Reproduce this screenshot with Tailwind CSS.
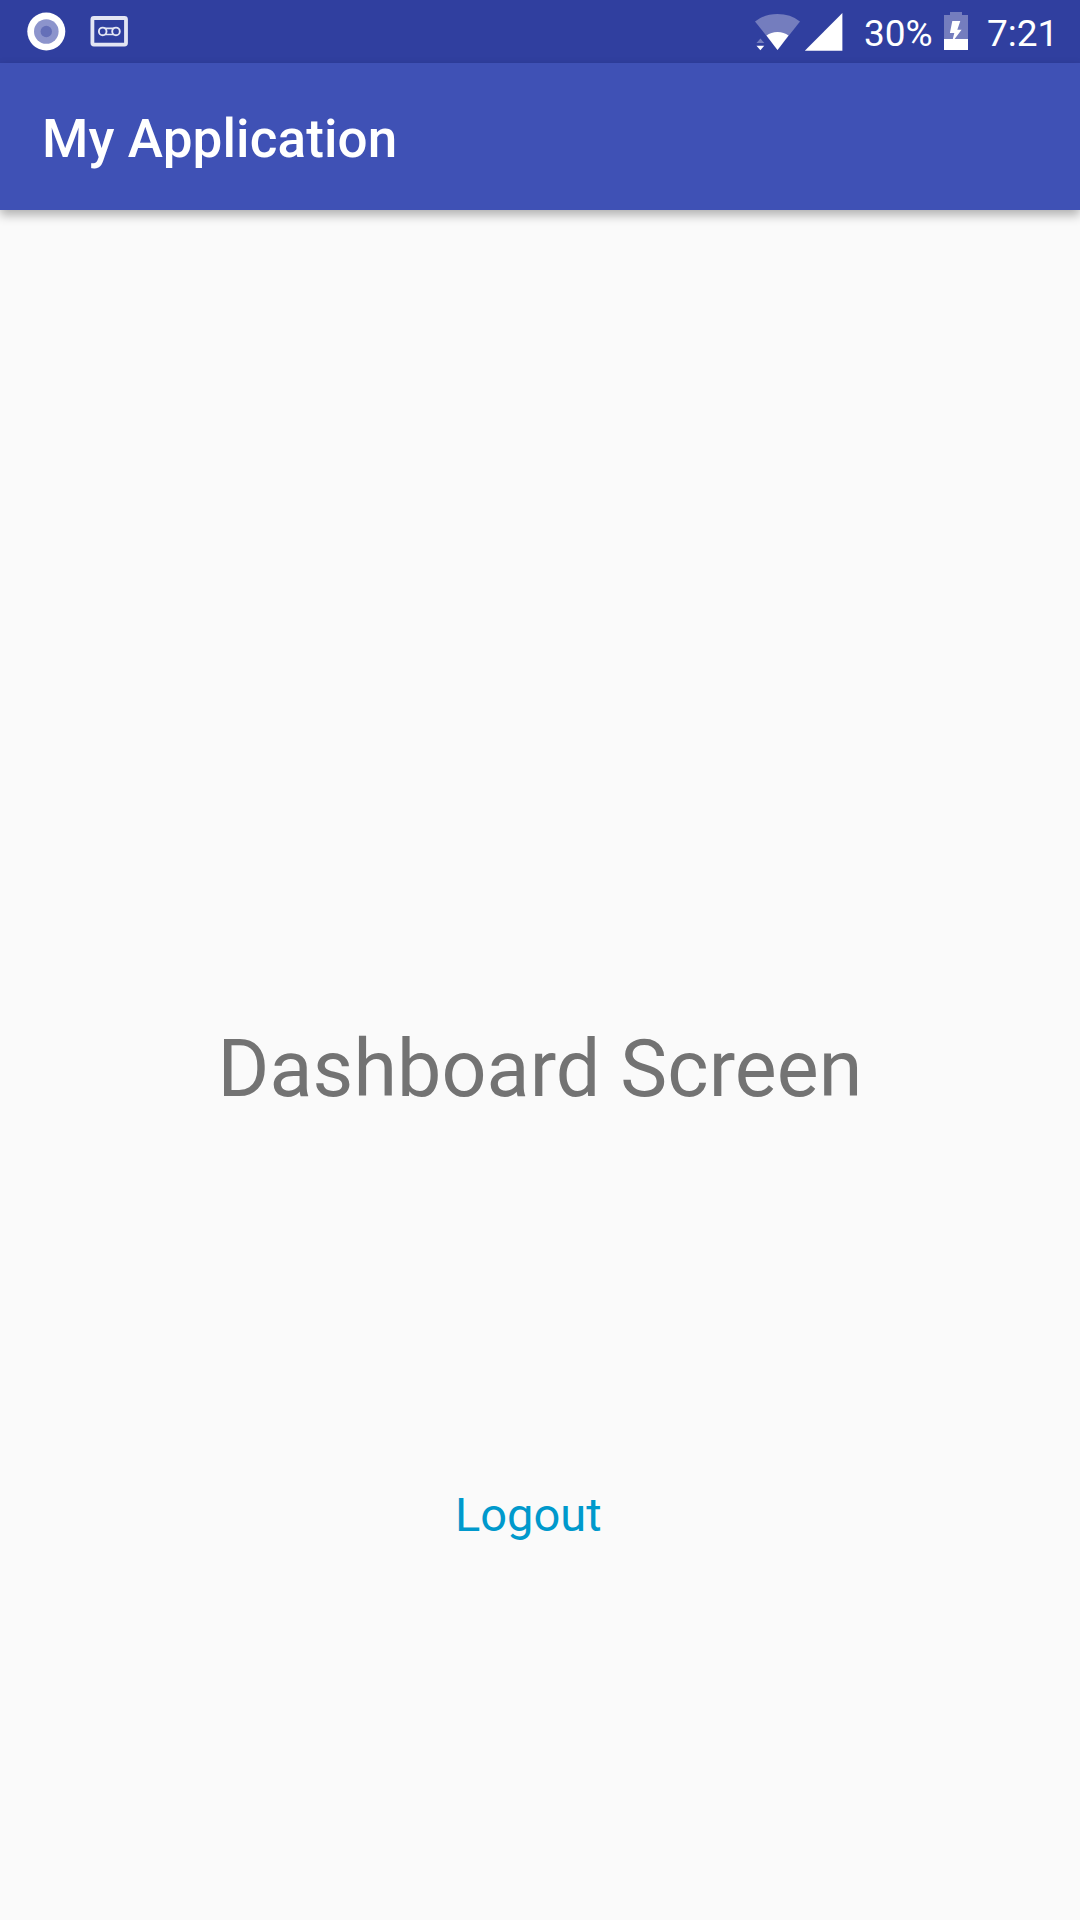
<!DOCTYPE html>
<html lang="en">
<head>
<meta charset="utf-8">
<title>My Application</title>
<script src="https://cdn.jsdelivr.net/npm/@tailwindcss/browser@4"></script>
</head>
<body class="bg-[#fafafa]">
<div class="flex h-[1920px] w-[1080px] flex-col overflow-hidden bg-[#fafafa] font-['Roboto',sans-serif]">
  <div class="flex h-[63px] shrink-0 justify-between bg-[#303f9f] text-white">
    <svg class="h-[63px] w-[150px]" viewBox="0 0 150 63">
      <circle cx="46.3" cy="31.5" r="19" fill="#fff"/>
      <circle cx="46.3" cy="31.5" r="12.3" fill="#8c94cc"/>
      <circle cx="46.3" cy="31.5" r="5.7" fill="#646fb8"/>
      <g fill="none" stroke="#e3e5f3">
        <rect x="92.4" y="18" width="33.6" height="26.6" rx="1.5" stroke-width="3.8"/>
        <g stroke-width="1.9">
          <circle cx="102.7" cy="31.4" r="3.8"/>
          <circle cx="116" cy="31.4" r="3.8"/>
          <path d="M104.5 28.4H114.2M104.5 34.5H114.2" stroke-width="1.6"/>
        </g>
      </g>
    </svg>
    <div class="flex">
      <svg class="h-[63px] w-[110px]" viewBox="750 0 110 63">
        <path d="M777.5 50L755 21.4Q764.5 14 777.5 14T800 21.4Z" fill="#747dbe"/>
        <path d="M777.5 50L766.5 35.5Q771 32 777.5 32T788.5 35.5Z" fill="#fff"/>
        <path d="M756.5 43L760.4 38.5L764.3 43Z" fill="#747dbe"/>
        <path d="M756.5 45.7H764.3L760.4 50.2Z" fill="#fff"/>
        <path d="M842.4 13V50.8H804.8Z" fill="#fff"/>
      </svg>
      <span class="ml-1 w-[71px] whitespace-nowrap pt-px text-[37px] leading-[65px]">30%</span>
      <svg class="ml-[9px] h-[63px] w-6" viewBox="944 0 24 63">
        <path d="M944 15H950V12H962V15H968V39H944Z" fill="#747dbe"/>
        <path d="M944 39H968V50H944Z" fill="#fff"/>
        <path d="M952.3 21H960.3L957.3 29.8H961.6L954.6 39H952.8L954.3 33H949.9Z" fill="#fff"/>
      </svg>
      <span class="ml-[19px] w-[93px] whitespace-nowrap pt-px text-[37px] leading-[65px]">7:21</span>
    </div>
  </div>
  <header class="relative h-[147px] shrink-0 bg-[#3f51b5] pl-[42px] pt-[46px] shadow-[0_5px_10px_rgba(0,0,0,0.3)]">
    <h1 class="text-[53px] font-medium leading-[60px] tracking-[0.12px] text-white">My Application</h1>
  </header>
  <main class="flex flex-col">
    <p class="mt-[813px] text-center text-[79px] leading-[92px] tracking-[0.1px] text-[#737373]">Dashboard Screen</p>
    <p class="mt-[372px] pl-[455px] text-[47px] leading-[56px] text-[#0099cc]">Logout</p>
  </main>
</div>
</body>
</html>
